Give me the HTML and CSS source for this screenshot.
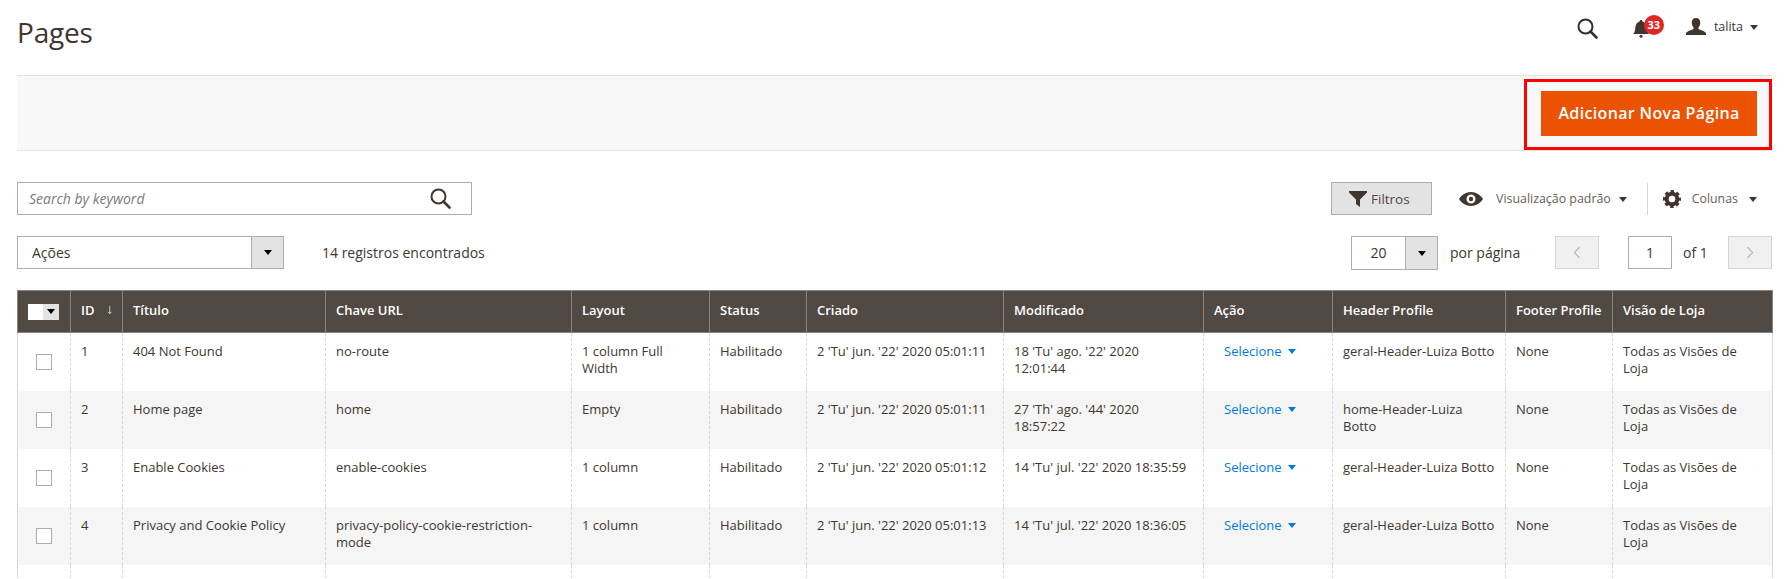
FILE: index.html
```html
<!DOCTYPE html>
<html lang="pt">
<head>
<meta charset="utf-8">
<title>Pages</title>
<link rel="stylesheet" href="styles.css">
</head>
<body>
<header class="top">
  <h1 class="title">Pages</h1>
  <div class="top-tools">
    <svg class="ic-search-top" viewBox="0 0 21 21"><circle cx="8.5" cy="8.5" r="7" fill="none" stroke="#303030" stroke-width="2"/><path d="M13.5 13.5l6 6" stroke="#303030" stroke-width="2.6" stroke-linecap="round"/></svg>
    <div class="bell-wrap">
      <svg class="ic-bell" viewBox="0 0 16 18"><path d="M8 0c1 0 1.500.7 1.500 1.400C12.500 2.200 13.500 5 13.700 8c.2 3 1 4.700 2.300 6H0c1.300-1.300 2.100-3 2.300-6 .2-3 1.200-5.800 4.200-6.600C6.500.7 7 0 8 0z" fill="#41362f"/><circle cx="8" cy="16.300" r="1.500" fill="#41362f"/></svg>
      <span class="badge">33</span>
    </div>
    <svg class="ic-user" viewBox="0 0 20 17"><path d="M10 0c2.700 0 4.300 1.900 4.300 4.500 0 2.200-1 4.300-2 5.200 0 1 .3 1.500 1.500 2 2.300.8 5.200 1.500 6.200 3.300V17H0v-2c1-1.800 3.900-2.500 6.200-3.300 1.200-.5 1.500-1 1.500-2-1-.9-2-3-2-5.200C5.700 1.900 7.300 0 10 0z" fill="#41362f"/></svg>
    <span class="user-name">talita</span>
    <span class="caret"></span>
  </div>
</header>

<section class="action-bar">
  <div class="highlight">
    <button class="primary">Adicionar Nova Página</button>
  </div>
</section>

<section class="controls">
  <div class="search-box">
    <span class="placeholder">Search by keyword</span>
    <svg class="ic-search" viewBox="0 0 21 21"><circle cx="8.500" cy="8.500" r="7" fill="none" stroke="#41362f" stroke-width="2"/><path d="M13.500 13.500l6 6" stroke="#41362f" stroke-width="2.600" stroke-linecap="round"/></svg>
  </div>
  <button class="filters">
    <svg class="ic-filter" viewBox="0 0 18 16"><path d="M0 0h18v1.500L11 8.500V16L7 13V8.500L0 1.500z" fill="#41362f"/></svg>Filtros
  </button>
  <svg class="ic-eye" viewBox="0 0 24 14"><path fill-rule="evenodd" d="M12 0c5 0 9.500 3 12 7-2.500 4-7 7-12 7S2.500 11 0 7c2.500-4 7-7 12-7zm0 2.500a4.500 4.500 0 100 9 4.500 4.500 0 000-9zm0 2.300a2.200 2.200 0 110 4.400 2.200 2.200 0 010-4.400z" fill="#41362f"/></svg>
  <span class="view-label">Visualização padrão</span>
  <span class="caret caret-view"></span>
  <span class="divider"></span>
  <svg class="ic-gear" viewBox="0 0 18 18"><circle cx="9" cy="9" r="5.300" fill="none" stroke="#41362f" stroke-width="4"/><circle cx="9" cy="9" r="7.600" fill="none" stroke="#41362f" stroke-width="2.800" stroke-dasharray="3.400 2.570" stroke-dashoffset="1.700"/></svg>
  <span class="col-label">Colunas</span>
  <span class="caret caret-col"></span>
</section>

<section class="controls second">
  <div class="select actions-select">
    <span class="select-text">Ações</span>
    <span class="select-btn"><span class="caret dark"></span></span>
  </div>
  <span class="records">14 registros encontrados</span>
  <div class="select per-page">
    <span class="select-text">20</span>
    <span class="select-btn"><span class="caret dark"></span></span>
  </div>
  <span class="per-label">por página</span>
  <button class="pager prev"><svg viewBox="0 0 10 18"><path d="M8.500 1.500L1.500 9l7 7.500" fill="none" stroke="#adadad" stroke-width="1.500"/></svg></button>
  <span class="page-input">1</span>
  <span class="of">of 1</span>
  <button class="pager next"><svg viewBox="0 0 10 18"><path d="M1.500 1.500l7 7.500-7 7.500" fill="none" stroke="#adadad" stroke-width="1.500"/></svg></button>
</section>

<table class="grid">
  <colgroup>
    <col class="c1"><col class="c2"><col class="c3"><col class="c4"><col class="c5"><col class="c6"><col class="c7"><col class="c8"><col class="c9"><col class="c10"><col class="c11"><col class="c12">
  </colgroup>
  <thead>
    <tr>
      <th><span class="head-check"><span class="head-box"></span><span class="head-arrow"><span class="caret black"></span></span></span></th>
      <th><span class="id-head">ID<svg class="ic-sort" viewBox="0 0 9 14"><path d="M4.500 0v13M1.800 10l2.700 3.200L7.200 10" fill="none" stroke="#fff" stroke-width="1.100"/></svg></span></th>
      <th>Título</th><th>Chave URL</th><th>Layout</th><th>Status</th><th>Criado</th><th>Modificado</th><th>Ação</th><th>Header Profile</th><th>Footer Profile</th><th>Visão de Loja</th>
    </tr>
  </thead>
  <tbody>
    <tr>
      <td><span class="check"></span></td><td>1</td><td>404 Not Found</td><td>no-route</td><td>1 column Full Width</td><td>Habilitado</td><td>2 'Tu' jun. '22' 2020 05:01:11</td><td>18 'Tu' ago. '22' 2020 12:01:44</td>
      <td><span class="sel">Selecione<span class="caret blue"></span></span></td><td>geral-Header-Luiza Botto</td><td>None</td><td>Todas as Visões de Loja</td>
    </tr>
    <tr>
      <td><span class="check"></span></td><td>2</td><td>Home page</td><td>home</td><td>Empty</td><td>Habilitado</td><td>2 'Tu' jun. '22' 2020 05:01:11</td><td>27 'Th' ago. '44' 2020 18:57:22</td>
      <td><span class="sel">Selecione<span class="caret blue"></span></span></td><td>home-Header-Luiza Botto</td><td>None</td><td>Todas as Visões de Loja</td>
    </tr>
    <tr>
      <td><span class="check"></span></td><td>3</td><td>Enable Cookies</td><td>enable-cookies</td><td>1 column</td><td>Habilitado</td><td>2 'Tu' jun. '22' 2020 05:01:12</td><td>14 'Tu' jul. '22' 2020 18:35:59</td>
      <td><span class="sel">Selecione<span class="caret blue"></span></span></td><td>geral-Header-Luiza Botto</td><td>None</td><td>Todas as Visões de Loja</td>
    </tr>
    <tr>
      <td><span class="check"></span></td><td>4</td><td>Privacy and Cookie Policy</td><td>privacy-policy-cookie-restriction-mode</td><td>1 column</td><td>Habilitado</td><td>2 'Tu' jun. '22' 2020 05:01:13</td><td>14 'Tu' jul. '22' 2020 18:36:05</td>
      <td><span class="sel">Selecione<span class="caret blue"></span></span></td><td>geral-Header-Luiza Botto</td><td>None</td><td>Todas as Visões de Loja</td>
    </tr>
    <tr class="cut">
      <td></td><td></td><td></td><td></td><td></td><td></td><td></td><td></td><td></td><td></td><td></td><td></td>
    </tr>
  </tbody>
</table>
</body>
</html>
```

FILE: styles.css
```css
* { box-sizing: border-box; }
html, body { margin: 0; height: 579px; overflow: hidden; background: #fff; }
body {
  padding: 0 14px 0 17px;
  font-family: "Open Sans", "Liberation Sans", sans-serif;
  font-size: 14px;
  color: #41362f;
}
button { font-family: inherit; margin: 0; cursor: pointer; }

.top { height: 75px; display: flex; justify-content: space-between; align-items: flex-start; }
.title { margin: 14px 0 0; font-size: 28px; line-height: 36px; font-weight: 400; color: #41362f; letter-spacing: -.2px; }
.top-tools { display: flex; align-items: flex-start; padding-top: 18px; }
.ic-search-top { width: 21px; height: 21px; margin-right: 35px; }
.bell-wrap { position: relative; width: 16px; height: 18px; margin-top: 2px; margin-right: 37px; }
.ic-bell { display: block; width: 16px; height: 18px; }
.badge {
  position: absolute; left: 11px; top: -5px; width: 20px; height: 20px; border-radius: 50%;
  background: #e22626; color: #fff; font-size: 11px; font-weight: 700; line-height: 20px; text-align: center;
}
.ic-user { width: 20px; height: 17px; margin-right: 8px; }
.user-name { font-size: 12.5px; line-height: 16px; margin: 1px 7px 0 0; color: #41362f; }
.caret {
  display: inline-block; width: 0; height: 0; margin-top: 7px; margin-right: 14px;
  border-left: 4px solid transparent; border-right: 4px solid transparent; border-top: 5px solid #41362f;
}

.action-bar {
  height: 76px; background: #f8f8f8; border-top: 1px solid #e3e3e3; border-bottom: 1px solid #e3e3e3;
  display: flex; justify-content: flex-end; align-items: flex-start;
}
.highlight { margin-top: 3px; width: 248px; height: 71px; border: 3px solid #f00; padding: 9px 12px 0 14px; }
.primary {
  display: block; width: 216px; height: 45px; border: 0; padding: 0 0 2px; background: #eb5202; color: #fff;
  font-size: 16px; font-weight: 600; letter-spacing: .35px;
}

.controls { display: flex; align-items: center; height: 33px; margin-top: 31px; }
.second { margin-top: 21px; }
.search-box {
  width: 455px; height: 33px; border: 1px solid #adadad; display: flex; align-items: center;
  justify-content: space-between; padding: 0 20px 0 11px;
}
.placeholder { font-style: italic; font-size: 14px; color: #7a7a7a; }
.ic-search { width: 21px; height: 21px; }
.filters {
  margin-left: 859px; width: 101px; height: 33px; border: 1px solid #adadad; background: #e3e3e3;
  color: #514943; font-size: 13.5px; font-weight: 500; padding: 0 0 0 17px; display: flex; align-items: center;
}
.ic-filter { width: 18px; height: 16px; margin-right: 4px; }
.ic-eye { width: 24px; height: 14px; margin-left: 27px; flex: none; }
.view-label { margin-left: 13px; font-size: 12.4px; color: #676056; white-space: nowrap; }
.caret-view { margin: 2px 0 0 8px; }
.divider { width: 1px; height: 32px; background: #d6d6d6; margin-left: 20px; }
.ic-gear { width: 18px; height: 18px; margin-left: 15px; flex: none; }
.col-label { margin-left: 11px; font-size: 12.3px; color: #676056; }
.caret-col { margin: 2px 0 0 11px; }

.select { height: 33px; border: 1px solid #adadad; display: flex; align-items: stretch; background: #fff; flex: none; }
.select-text { flex: 1; line-height: 31px; color: #41362f; }
.select-btn { width: 32px; background: #e3e3e3; border-left: 1px solid #adadad; display: flex; align-items: center; justify-content: center; }
.caret.dark, .caret.black { margin: 0; border-top-color: #000; }
.actions-select { width: 267px; }
.actions-select .select-text { padding-left: 14px; }
.records { margin-left: 38px; white-space: nowrap; }
.per-page { width: 87px; height: 34px; margin-left: auto; align-self: flex-start; }
.per-page .select-text { text-align: center; line-height: 32px; }
.per-page .select-btn { flex: none; }
.per-label { margin-left: 12px; width: 105px; white-space: nowrap; flex: none; }
.pager {
  width: 44px; height: 33px; border: 1px solid #d6d6d6; background: #f0f0f0; padding: 0;
  display: flex; align-items: center; justify-content: center; flex: none;
}
.pager svg { width: 8px; height: 13px; }
.page-input { width: 44px; height: 33px; border: 1px solid #adadad; margin-left: 29px; text-align: center; line-height: 31px; flex: none; }
.of { margin-left: 11px; width: 45px; white-space: nowrap; flex: none; }

.grid {
  margin-top: 21px; width: 1755px; table-layout: fixed; border-collapse: collapse; font-size: 13px;
  border-right: 1px solid #d6d6d6; border-left: 1px solid #d6d6d6;
}
.c1 { width: 53px; } .c2 { width: 52px; } .c3 { width: 203px; } .c4 { width: 246px; }
.c5 { width: 138px; } .c6 { width: 97px; } .c7 { width: 197px; } .c8 { width: 200px; }
.c9 { width: 129px; } .c10 { width: 173px; } .c11 { width: 107px; } .c12 { width: 160px; }
th {
  height: 42px; background: #514943; color: #fff; font-size: 13px; font-weight: 600; text-align: left;
  padding: 0 10px 3px; border: 1px solid #8a837f; white-space: nowrap; vertical-align: middle;
}
td {
  height: 58px; padding: 10px 10px 0; vertical-align: top; line-height: 17px;
  border-left: 1px dashed #d6d6d6; border-right: 1px dashed #d6d6d6;
}
tbody tr:nth-child(even) td { background: #f5f5f5; }
td:first-child { border-left: 0; }
th:first-child { padding: 0 0 0 10px; }
tbody tr.cut td { height: 13px; padding: 0; }
.head-check { display: flex; width: 31px; height: 16px; }
.head-box { width: 15px; background: #fff; }
.head-arrow { width: 16px; background: #e3e3e3; display: flex; align-items: center; justify-content: center; }
.id-head { display: flex; align-items: center; }
.ic-sort { width: 9px; height: 14px; margin-left: 12px; }
.check { display: block; width: 16px; height: 16px; margin: 11px 0 0 8px; border: 1px solid #adadad; background: #fff; }
.sel { color: #007bdb; margin-left: 10px; white-space: nowrap; display: inline-flex; align-items: center; }
.caret.blue { margin: 0 0 0 6px; border-top-color: #007bdb; }
```
